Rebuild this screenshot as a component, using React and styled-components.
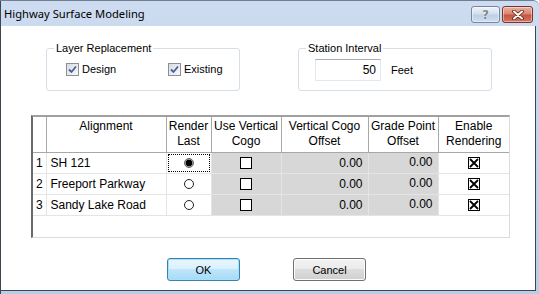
import styled, { createGlobalStyle } from "styled-components";

const GlobalStyle = createGlobalStyle`
  html, body { margin: 0; padding: 0; background: #fff; }
  body { font-family: "Liberation Sans", Arial, sans-serif; color: #000; }
`;

const rows = [
  { id: 1, name: "SH 121", last: true },
  { id: 2, name: "Freeport Parkway" },
  { id: 3, name: "Sandy Lake Road" },
];

const Window = styled.div`
  width: 539px;
  height: 294px;
  box-sizing: border-box;
  display: flex;
  flex-direction: column;
  background: linear-gradient(#cddcf0, #b8cde8);
  border-left: 1px solid #3c4650;
  border-top: 1px solid #6f7f90;
  border-top-right-radius: 6px;
  overflow: hidden;
`;

const TitleBar = styled.div`
  height: 25px;
  flex: none;
  display: flex;
  align-items: flex-start;
  justify-content: space-between;
  padding: 0 6px 0 3px;
`;

const Title = styled.span`
  font-family: "Noto Sans", sans-serif;
  font-size: 11.2px;
  line-height: 26px;
`;

const Caption = styled.div`
  display: flex;
  gap: 2px;
  padding-top: 5px;
`;

const CapButton = styled.div`
  width: ${(p) => p.$w}px;
  height: 17px;
  box-sizing: border-box;
  border-radius: 3px;
  display: flex;
  align-items: center;
  justify-content: center;
  border: 1px solid ${(p) => (p.$close ? "#7a3326" : "#76869b")};
  background: ${(p) =>
    p.$close
      ? "linear-gradient(#eab0a2, #d98470 48%, #c6533c 52%, #d47560)"
      : "linear-gradient(#eef3fa, #d2deed 48%, #bccfe6 52%, #d0def0)"};
  box-shadow: inset 0 0 0 1px rgba(255, 255, 255, 0.45);
`;

const Help = styled.span`
  font-family: "DejaVu Sans", sans-serif;
  font-size: 12px;
  font-weight: bold;
  color: #7d8792;
  text-shadow: 0 0 1px #fff, 0 0 1px #fff;
  line-height: 14px;
`;

const Client = styled.div`
  width: 535px;
  height: 265px;
  box-sizing: border-box;
  background: #fff;
  border-right: 1px solid #3c4650;
  border-bottom: 1px solid #3c4650;
  display: flex;
  flex-direction: column;
  padding-top: 22px;
  font-size: 11px;
`;

const TopRow = styled.div`
  display: flex;
  gap: 58px;
  padding-left: 45px;
`;

const Group = styled.div`
  position: relative;
  width: 194px;
  height: 43px;
  box-sizing: border-box;
  padding-left: ${(p) => p.$indent}px;
  border: 1px solid #d5dfe5;
  border-radius: 3px;
  display: flex;
  align-items: center;
`;

const Legend = styled.span`
  position: absolute;
  top: -8px;
  left: 7px;
  padding: 0 2px;
  background: #fff;
  font-size: 11px;
  line-height: 14px;
`;

const CheckItem = styled.label`
  flex: none;
  width: ${(p) => (p.$w ? `${p.$w}px` : "auto")};
  display: flex;
  align-items: center;
  gap: 3px;
  line-height: 13px;
`;

const Box = styled.span`
  width: 13px;
  height: 13px;
  box-sizing: border-box;
  border: 1px solid #8f8f8f;
  background: linear-gradient(135deg, #d6dce4, #f7f8fa);
  display: flex;
  align-items: center;
  justify-content: center;
`;

const FieldRow = styled.div`
  display: flex;
  align-items: center;
  gap: 10px;
`;

const Input = styled.div`
  width: 66px;
  height: 22px;
  box-sizing: border-box;
  border: 1px solid #e3e9ef;
  border-top-color: #abadb3;
  display: flex;
  align-items: center;
  justify-content: flex-end;
  padding-right: 4px;
  font-size: 12px;
`;

const GridBox = styled.div`
  margin: 24px 0 0 30px;
  width: 479px;
  height: 123px;
  box-sizing: border-box;
  border-top: 2px solid #a0a0a0;
  border-left: 2px solid #6a6a6a;
  border-right: 1px solid #dcdcdc;
  border-bottom: 1px solid #dcdcdc;
  background: #fff;
`;

const Table = styled.table`
  width: 476px;
  border-collapse: collapse;
  table-layout: fixed;
  font-size: 12px;
  tr:first-child > * { border-top: none; }
  tr > *:first-child { border-left: none; }
  tr > *:last-child { border-right: none; }
`;

const Head = styled.th`
  height: 35px;
  padding: 2px 0 0;
  box-sizing: border-box;
  vertical-align: top;
  font-weight: normal;
  line-height: 15px;
  border: 1px solid #a8a8a8;
`;

const Cell = styled.td`
  height: 20px;
  box-sizing: border-box;
  padding: ${(p) => (p.$align === "left" ? "0 0 0 4px" : p.$align === "right" ? `0 5px ${p.$lift || 0}px 0` : "0")};
  text-align: ${(p) => p.$align || "center"};
  background: ${(p) => (p.$shade ? "#d7d7d7" : "#fff")};
  border: 1px solid #e4e4e4;
  white-space: nowrap;
  line-height: 18px;
`;

const Focus = styled.div`
  height: 16px;
  margin: 0 1px;
  border: 1px dotted #000;
  display: flex;
  align-items: center;
  justify-content: center;
`;

const Center = styled.div`
  display: flex;
  align-items: center;
  justify-content: center;
`;

const Radio = styled.span`
  width: 10px;
  height: 10px;
  box-sizing: border-box;
  border-radius: 50%;
  border: 1px solid ${(p) => (p.$on ? "#6b6b6b" : "#222")};
  background: ${(p) => (p.$on ? "radial-gradient(circle, #000 0 3px, #9a9a9a 3.6px)" : "#fff")};
`;

const GridCheck = styled.span`
  width: 12px;
  height: 12px;
  box-sizing: border-box;
  border: 1px solid #000;
  background: #fff;
  display: flex;
`;

const Buttons = styled.div`
  display: flex;
  gap: 53px;
  padding: 20px 0 0 166px;
`;

const Button = styled.button`
  width: 73px;
  height: 23px;
  box-sizing: border-box;
  border-radius: 3px;
  font-family: "Liberation Sans", Arial, sans-serif;
  font-size: 11px;
  color: #000;
  padding: 0;
  border: 1px solid ${(p) => (p.$default ? "#3c7fb1" : "#707070")};
  background: ${(p) =>
    p.$default
      ? "linear-gradient(#eaf6fd, #d9f0fc 50%, #bee6fd 50%, #a7d9f5)"
      : "linear-gradient(#f2f2f2, #ebebeb 50%, #dddddd 50%, #cfcfcf)"};
  box-shadow: inset 0 0 0 1px ${(p) => (p.$default ? "#9fe4fb" : "#fcfcfc")};
`;

const Tick = () => (
  <svg width="9" height="9" viewBox="0 0 9 9">
    <path d="M1 4.5 L3.5 7 L8 1.5" fill="none" stroke="#4a5f9a" strokeWidth="1.8" />
  </svg>
);

const Cross = () => (
  <svg width="10" height="10" viewBox="0 0 10 10">
    <path d="M1 1 L9 9 M9 1 L1 9" stroke="#000" strokeWidth="1.8" />
  </svg>
);

const CloseGlyph = () => (
  <svg width="14" height="10" viewBox="0 0 14 10">
    <path d="M3 1.5 L11 8.5 M11 1.5 L3 8.5" stroke="#5a2016" strokeWidth="3.6" strokeLinecap="round" />
    <path d="M3 1.5 L11 8.5 M11 1.5 L3 8.5" stroke="#fff" strokeWidth="2" strokeLinecap="round" />
  </svg>
);

export default function App() {
  return (
    <>
      <GlobalStyle />
      <Window>
        <TitleBar>
          <Title>Highway Surface Modeling</Title>
          <Caption>
            <CapButton $w={29}>
              <Help>?</Help>
            </CapButton>
            <CapButton $w={31} $close>
              <CloseGlyph />
            </CapButton>
          </Caption>
        </TitleBar>
        <Client>
          <TopRow>
            <Group $indent={19}>
              <Legend>Layer Replacement</Legend>
              <CheckItem $w={102}>
                <Box><Tick /></Box>
                Design
              </CheckItem>
              <CheckItem>
                <Box><Tick /></Box>
                Existing
              </CheckItem>
            </Group>
            <Group $indent={16}>
              <Legend>Station Interval</Legend>
              <FieldRow>
                <Input>50</Input>
                Feet
              </FieldRow>
            </Group>
          </TopRow>

          <GridBox>
            <Table>
              <colgroup>
                <col style={{ width: 13 }} />
                <col style={{ width: 120 }} />
                <col style={{ width: 45 }} />
                <col style={{ width: 70 }} />
                <col style={{ width: 87 }} />
                <col style={{ width: 70 }} />
                <col />
              </colgroup>
              <thead>
                <tr>
                  <Head />
                  <Head>Alignment</Head>
                  <Head>Render<br />Last</Head>
                  <Head>Use Vertical<br />Cogo</Head>
                  <Head>Vertical Cogo<br />Offset</Head>
                  <Head>Grade Point<br />Offset</Head>
                  <Head>Enable<br />Rendering</Head>
                </tr>
              </thead>
              <tbody>
                {rows.map((r) => (
                  <tr key={r.id}>
                    <Cell>{r.id}</Cell>
                    <Cell $align="left">{r.name}</Cell>
                    <Cell>
                      {r.last ? (
                        <Focus><Radio $on /></Focus>
                      ) : (
                        <Center><Radio /></Center>
                      )}
                    </Cell>
                    <Cell $shade>
                      <Center><GridCheck /></Center>
                    </Cell>
                    <Cell $shade $align="right">0.00</Cell>
                    <Cell $shade $align="right" $lift={2}>0.00</Cell>
                    <Cell>
                      <Center><GridCheck><Cross /></GridCheck></Center>
                    </Cell>
                  </tr>
                ))}
              </tbody>
            </Table>
          </GridBox>

          <Buttons>
            <Button $default>OK</Button>
            <Button>Cancel</Button>
          </Buttons>
        </Client>
      </Window>
    </>
  );
}
